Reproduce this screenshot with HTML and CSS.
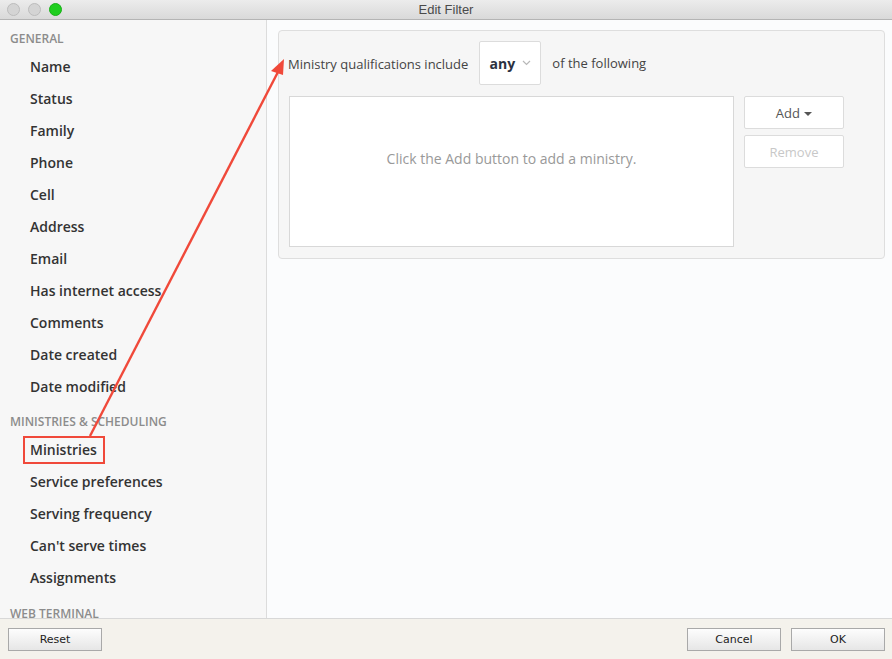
FILE: index.html
```html
<!DOCTYPE html>
<html lang="en">
<head>
    <meta charset="UTF-8">
    <title>Edit Filter</title>
    <link rel="stylesheet" href="styles.css">
</head>
<body>

    <div id="window">

        <div id="titlebar">
            <div class="lights">
                <span class="light"></span>
                <span class="light"></span>
                <span class="light green"></span>
            </div>
            <span class="title">Edit Filter</span>
        </div>

        <div id="content">

            <div id="sidebar">
                <div class="group">General</div>
                <div class="item">Name</div>
                <div class="item">Status</div>
                <div class="item">Family</div>
                <div class="item">Phone</div>
                <div class="item">Cell</div>
                <div class="item">Address</div>
                <div class="item">Email</div>
                <div class="item">Has internet access</div>
                <div class="item">Comments</div>
                <div class="item">Date created</div>
                <div class="item">Date modified</div>
                <div class="group">Ministries &amp; Scheduling</div>
                <div class="item"><span class="marked">Ministries</span></div>
                <div class="item">Service preferences</div>
                <div class="item">Serving frequency</div>
                <div class="item">Can't serve times</div>
                <div class="item">Assignments</div>
                <div class="group last">Web Terminal</div>
            </div>

            <div id="main">
                <div class="card">
                    <div class="rule-row">
                        <span>Ministry qualifications include</span>
                        <span class="select">any
                            <svg width="9" height="6" viewBox="0 0 9 6"><path d="M1 1l3.5 3.5L8 1" fill="none" stroke="#b8b8b8" stroke-width="1.2"/></svg>
                        </span>
                        <span>of the following</span>
                    </div>
                    <div class="list-row">
                        <div class="list">Click the Add button to add a ministry.</div>
                        <div class="list-buttons">
                            <button class="btn">Add <span class="caret"></span></button>
                            <button class="btn" disabled>Remove</button>
                        </div>
                    </div>
                </div>
            </div>

        </div>

        <div id="footer">
            <button class="win-btn">Reset</button>
            <div class="spacer"></div>
            <button class="win-btn">Cancel</button>
            <button class="win-btn">OK</button>
        </div>

        <!-- annotation: box + arrow drawn over the dialog -->
        <svg id="annotation" width="892" height="659" viewBox="0 0 892 659">
            <line x1="90" y1="436" x2="279" y2="70" stroke="#f0493a" stroke-width="2.4"/>
            <path d="M284 59 L271 71 L283 75 Z" fill="#f0493a"/>
        </svg>

    </div>

</body>
</html>
```

FILE: styles.css
```css
html, body {
    margin: 0;
    padding: 0;
}

body {
    width: 892px;
    height: 659px;
    overflow: hidden;
    font-family: "Open Sans", "Noto Sans", sans-serif;
}

#window {
    position: relative;
    width: 892px;
    height: 659px;
    display: flex;
    flex-direction: column;
    background-color: #fbfcfd;
}

/* title bar */
#titlebar {
    height: 19px;
    flex-shrink: 0;
    display: flex;
    align-items: center;
    position: relative;
    background: linear-gradient(#ececec, #d9d9d9);
    border-bottom: 1px solid #b4b4b4;
}

.lights {
    display: flex;
    gap: 8px;
    padding-left: 7px;
}

.light {
    width: 11px;
    height: 11px;
    border-radius: 50%;
    background-color: #d4d4d4;
    border: 0.5px solid #bcbcbc;
}

.light.green {
    background-color: #1fce1f;
    border-color: #18b018;
}

.title {
    position: absolute;
    left: 0;
    right: 0;
    text-align: center;
    font-family: "Liberation Sans", Arial, sans-serif;
    font-size: 13px;
    color: #4a4a4a;
}

#content {
    flex: 1;
    display: flex;
    min-height: 0;
}

/* left list */
#sidebar {
    width: 266px;
    flex-shrink: 0;
    overflow: hidden;
    background-color: #f7f7f7;
    border-right: 1px solid #dcdcdc;
}

.group {
    height: 16px;
    line-height: 16px;
    padding: 11px 0 4px 10px;
    font-size: 12px;
    font-weight: 600;
    text-transform: uppercase;
    color: #8c8c8c;
}

.group.last {
    padding-top: 12px;
}

.item {
    height: 32px;
    line-height: 32px;
    padding-left: 30px;
    font-size: 14px;
    font-weight: 600;
    color: #333;
}

.marked {
    display: inline-block;
    line-height: 24px;
    margin-left: -7px;
    padding: 0 6px 0 5px;
    border: 2px solid #f0493a;
}

/* right side */
#main {
    flex: 1;
    padding: 10px 7px 0 11px;
}

.card {
    background-color: #f6f6f6;
    border: 1px solid #dedede;
    border-radius: 4px;
    padding: 10px 10px 11px 10px;
}

.rule-row {
    display: flex;
    align-items: center;
    gap: 11px;
    font-size: 13px;
    color: #444;
}

.rule-row span:first-child {
    margin-left: -1px;
    padding-top: 1px;
}

.select {
    display: flex;
    align-items: center;
    justify-content: center;
    gap: 7px;
    width: 60px;
    height: 42px;
    background-color: #fff;
    border: 1px solid #dcdcdc;
    border-radius: 2px;
    font-size: 14px;
    font-weight: 700;
    color: #2b3140;
}

.list-row {
    display: flex;
    gap: 10px;
    margin-top: 11px;
}

.list {
    width: 443px;
    height: 97px;
    padding-top: 52px;
    text-align: center;
    background-color: #fff;
    border: 1px solid #d8d8d8;
    font-size: 14px;
    line-height: 20px;
    color: #999;
}

.list-buttons {
    display: flex;
    flex-direction: column;
    gap: 6px;
}

.btn {
    width: 100px;
    height: 33px;
    background-color: #fff;
    border: 1px solid #dcdcdc;
    border-radius: 2px;
    font-family: "Open Sans", sans-serif;
    font-size: 13px;
    color: #555;
}

.btn:disabled {
    color: #c8c8c8;
}

.caret {
    display: inline-block;
    margin-left: 1px;
    vertical-align: 2px;
    border-left: 4px solid transparent;
    border-right: 4px solid transparent;
    border-top: 4px solid #555;
}

/* bottom bar */
#footer {
    height: 40px;
    flex-shrink: 0;
    display: flex;
    align-items: center;
    gap: 10px;
    padding: 0 7px 0 8px;
    background-color: #f4f2ec;
    border-top: 1px solid #d8d8d8;
}

.spacer {
    flex: 1;
}

.win-btn {
    width: 94px;
    height: 23px;
    background: linear-gradient(#fdfdfd, #e6e6e6);
    border: 1px solid #a9a9a9;
    border-radius: 0;
    font-family: "DejaVu Sans", sans-serif;
    font-size: 11px;
    color: #222;
}

#annotation {
    position: absolute;
    left: 0;
    top: 0;
    pointer-events: none;
}
```
